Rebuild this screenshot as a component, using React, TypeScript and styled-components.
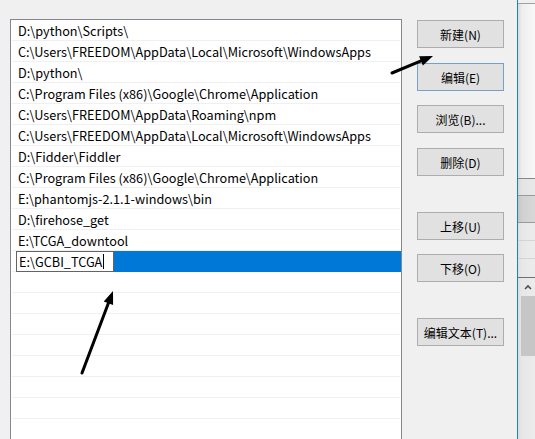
import React from "react";
import styled, { createGlobalStyle } from "styled-components";

const Global = createGlobalStyle`
  html, body { margin: 0; padding: 0; background: #f0f0f0; }
  body { font-family: "Noto Sans CJK SC", "Noto Sans", sans-serif; }
  #root { width: 535px; height: 439px; overflow: hidden; }
`;

const Screen = styled.div`
  position: relative;
  width: 535px;
  height: 439px;
  display: flex;
  overflow: hidden;
  background: #f0f0f0;
`;

const Dialog = styled.div`
  width: 517px;
  height: 439px;
  display: flex;
  align-items: flex-start;
  padding: 19px 0 0 10px;
  box-sizing: border-box;
  background: #f0f0f0;
`;

const ListBox = styled.div`
  width: 392px;
  height: 430px;
  box-sizing: border-box;
  border: 1px solid #828790;
  border-bottom: none;
  background: #ffffff;
  display: flex;
  flex-direction: column;
  padding: 0 1px;
  overflow: hidden;
`;

const Row = styled.div<{ $selected?: boolean }>`
  flex: 0 0 auto;
  height: 21px;
  box-sizing: border-box;
  border-bottom: 1px solid #f0f0f0;
  margin: ${(p) => (p.$selected ? "0 -1px 0 0" : "0")};
  display: flex;
  align-items: center;
  padding-left: ${(p) => (p.$selected ? "4px" : "6px")};
  font-size: 12.7px;
  color: #000;
  white-space: nowrap;
`;

const SelectionFill = styled.div`
  flex: 1 1 auto;
  align-self: stretch;
  margin-bottom: -1px;
  background: #0078d7;
`;

const EditBox = styled.div`
  flex: 0 0 auto;
  width: 98px;
  height: 21px;
  box-sizing: border-box;
  margin-top: 1px;
  background: #fff;
  border: 1px solid #646464;
  display: flex;
  align-items: center;
  padding-left: 2px;
  font-size: 12.7px;
  color: #000;
`;

const Caret = styled.span`
  display: inline-block;
  width: 1px;
  height: 15px;
  background: #000;
  margin-left: 1px;
`;

const ButtonColumn = styled.div`
  display: flex;
  flex-direction: column;
  margin-left: 15px;
  padding-top: 1px;
`;

const Button = styled.div<{ $gap: number; $focused?: boolean }>`
  width: 87px;
  height: 28px;
  box-sizing: border-box;
  margin-top: ${(p) => p.$gap}px;
  border: 1px solid ${(p) => (p.$focused ? "#7a9fc6" : "#adadad")};
  background: #e1e1e1;
  display: flex;
  align-items: center;
  justify-content: center;
  font-size: 12px;
  color: #000;
  white-space: nowrap;
`;

const FocusEdge = styled.div`
  width: 1px;
  height: 439px;
  background: #1a7fd9;
`;

const SidePanel = styled.div`
  width: 17px;
  height: 439px;
  display: flex;
  flex-direction: column;
`;

const Band = styled.div<{ $h: number; $bg: string; $line?: string }>`
  flex: 0 0 auto;
  height: ${(p) => p.$h}px;
  box-sizing: border-box;
  background: ${(p) => p.$bg};
  border-bottom: ${(p) => (p.$line ? `1px solid ${p.$line}` : "none")};
`;

const ScrollTrack = styled.div`
  flex: 1 1 auto;
  display: flex;
  flex-direction: column;
  background: linear-gradient(to right, #dcdcdc 0px, #e6e6e6 3px, #ececec 100%);
`;

const ScrollArrow = styled.div`
  height: 18px;
  display: flex;
  align-items: center;
  justify-content: center;
  padding-left: 2px;
`;

const ScrollThumb = styled.div`
  height: 60px;
  margin-left: 3px;
  background: #c6c6c6;
`;

const Overlay = styled.svg`
  position: absolute;
  left: 0;
  top: 0;
  pointer-events: none;
`;

const paths = [
  "D:\\python\\Scripts\\",
  "C:\\Users\\FREEDOM\\AppData\\Local\\Microsoft\\WindowsApps",
  "D:\\python\\",
  "C:\\Program Files (x86)\\Google\\Chrome\\Application",
  "C:\\Users\\FREEDOM\\AppData\\Roaming\\npm",
  "C:\\Users\\FREEDOM\\AppData\\Local\\Microsoft\\WindowsApps",
  "D:\\Fidder\\Fiddler",
  "C:\\Program Files (x86)\\Google\\Chrome\\Application",
  "E:\\phantomjs-2.1.1-windows\\bin",
  "D:\\firehose_get",
  "E:\\TCGA_downtool",
];

const buttons: { label: string; gap: number; focused?: boolean }[] = [
  { label: "新建(N)", gap: 0 },
  { label: "编辑(E)", gap: 15, focused: true },
  { label: "浏览(B)...", gap: 14 },
  { label: "删除(D)", gap: 15 },
  { label: "上移(U)", gap: 36 },
  { label: "下移(O)", gap: 14 },
  { label: "编辑文本(T)...", gap: 36 },
];

function Arrow({ x1, y1, x2, y2 }: { x1: number; y1: number; x2: number; y2: number }) {
  const dx = x2 - x1;
  const dy = y2 - y1;
  const len = Math.hypot(dx, dy);
  const ux = dx / len;
  const uy = dy / len;
  const headLen = 13;
  const headW = 5;
  const bx = x2 - ux * headLen;
  const by = y2 - uy * headLen;
  const px = -uy;
  const py = ux;
  const pts = `${x2},${y2} ${bx + px * headW},${by + py * headW} ${bx - px * headW},${by - py * headW}`;
  return (
    <g>
      <line x1={x1} y1={y1} x2={bx + ux * 2} y2={by + uy * 2} stroke="#000" strokeWidth={3} strokeLinecap="round" />
      <polygon points={pts} fill="#000" />
    </g>
  );
}

export default function App() {
  const emptyRows = Array.from({ length: 8 });
  return (
    <>
      <Global />
      <Screen>
        <Dialog>
          <ListBox>
            {paths.map((p, i) => (
              <Row key={i}>{p}</Row>
            ))}
            <Row $selected>
              <EditBox>
                E:\GCBI_TCGA
                <Caret />
              </EditBox>
              <SelectionFill />
            </Row>
            {emptyRows.map((_, i) => (
              <Row key={`e${i}`} />
            ))}
          </ListBox>
          <ButtonColumn>
            {buttons.map((b) => (
              <Button key={b.label} $gap={b.gap} $focused={b.focused}>
                {b.label}
              </Button>
            ))}
          </ButtonColumn>
        </Dialog>
        <FocusEdge />
        <SidePanel>
          <Band $h={4} $bg="#f0f0f0" $line="#a0a0a0" />
          <Band $h={175} $bg="linear-gradient(to right, #dadada 0px, #eeeeee 4px, #f8f8f8 100%)" $line="#888888" />
          <Band $h={17} $bg="linear-gradient(to right, #d8d8d8 0px, #e4e4e4 4px, #e8e8e8 100%)" $line="#9a9a9a" />
          <Band $h={27} $bg="linear-gradient(to right, #c4c4c4 0px, #d0d0d0 4px, #d8d8d8 100%)" $line="#9a9a9a" />
          <Band $h={18} $bg="linear-gradient(to right, #dedede 0px, #e8e8e8 4px, #ececec 100%)" $line="#d4d4d4" />
          <Band $h={18} $bg="linear-gradient(to right, #dedede 0px, #e8e8e8 4px, #ececec 100%)" $line="#d4d4d4" />
          <Band $h={19} $bg="linear-gradient(to right, #dedede 0px, #e8e8e8 4px, #ececec 100%)" $line="#707070" />
          <ScrollTrack>
            <ScrollArrow>
              <svg width="8" height="6" viewBox="0 0 8 6">
                <path d="M1 5 L4 2 L7 5" fill="none" stroke="#505050" strokeWidth="1.6" />
              </svg>
            </ScrollArrow>
            <ScrollThumb />
          </ScrollTrack>
        </SidePanel>
        <Overlay width="535" height="439" viewBox="0 0 535 439">
          <Arrow x1={392} y1={73} x2={433} y2={56} />
          <Arrow x1={82} y1={373} x2={113} y2={291} />
        </Overlay>
      </Screen>
    </>
  );
}
